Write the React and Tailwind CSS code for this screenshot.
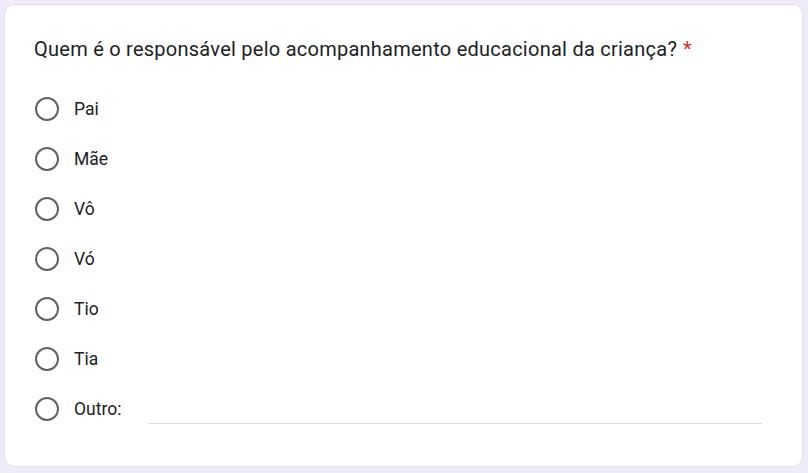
import React from 'react'

const options = ['Pai', 'Mãe', 'Vô', 'Vó', 'Tio', 'Tia']

const Radio = () => (
  <span className="ml-px w-[24px] h-[24px] rounded-full border-[2.5px] border-[#5f6368] shrink-0" />
)

export default function App() {
  return (
    <div
      className="w-[808px] h-[473px] bg-[#f0ebf8] p-[4px] pr-[5px] pb-[6px]"
      style={{ fontFamily: 'Roboto, "Liberation Sans", sans-serif' }}
    >
      <div className="h-full bg-white rounded-[10px] border border-[#e4e0ec] pl-[29px] pr-[40px] pt-[30px]">
        {/* Question title */}
        <div className="text-[20px] leading-[28px] text-[#202124] tracking-[0.25px]">
          Quem é o responsável pelo acompanhamento educacional da criança?
          <span className="text-[#d93025] ml-[6px]">*</span>
        </div>

        {/* Options */}
        <div className="mt-[21px] flex flex-col">
          {options.map((opt) => (
            <div key={opt} className="h-[50px] flex items-center gap-[15px]">
              <Radio />
              <span className="text-[17.5px] text-[#202124]">{opt}</span>
            </div>
          ))}
          <div className="h-[50px] flex items-center gap-[15px]">
            <Radio />
            <span className="text-[17.5px] text-[#202124]">Outro:</span>
            <div className="flex-1 ml-[12px] self-stretch flex items-end pb-[10px]">
              <div className="w-full border-b border-[#dadce0]" />
            </div>
          </div>
        </div>
      </div>
    </div>
  )
}
